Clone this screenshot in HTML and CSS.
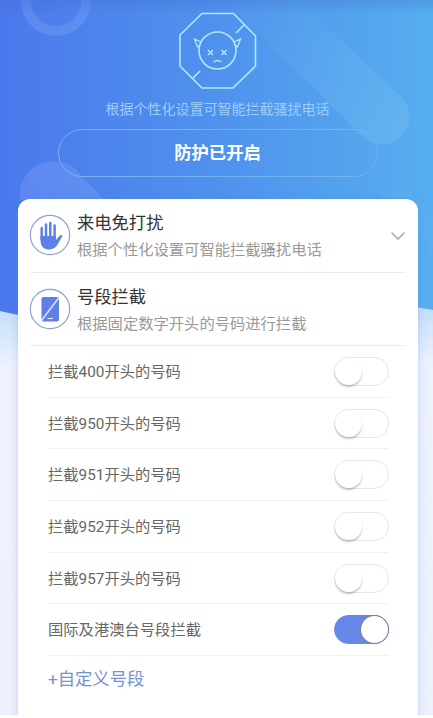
FILE: index.html
```html
<!DOCTYPE html>
<html lang="zh-CN">
<head>
<meta charset="utf-8">
<title>骚扰拦截</title>
<link rel="stylesheet" href="styles.css">
</head>
<body>
<main class="screen">
  <svg class="backdrop" width="433" height="360" viewBox="0 0 433 360" aria-hidden="true">
    <defs>
      <linearGradient id="sky" x1="0" y1="0" x2="1" y2="0">
        <stop offset="0" stop-color="#4b78ec"/>
        <stop offset=".5" stop-color="#4f92ed"/>
        <stop offset="1" stop-color="#56aeee"/>
      </linearGradient>
      <linearGradient id="shade" x1="0" y1="0" x2="0" y2="1">
        <stop offset="0" stop-color="#3f6cc8" stop-opacity=".3"/>
        <stop offset="1" stop-color="#3f6cc8" stop-opacity="0"/>
      </linearGradient>
      <linearGradient id="beam" gradientUnits="userSpaceOnUse" x1="270" y1="10" x2="390" y2="130">
        <stop offset="0" stop-color="#8fd0f5" stop-opacity=".03"/>
        <stop offset="1" stop-color="#8fd0f5" stop-opacity=".22"/>
      </linearGradient>
    </defs>
    <path d="M0 0H433V310L415 307L216 340L18 315L0 311Z" fill="url(#sky)"/>
    <circle cx="56" cy="1" r="30" fill="none" stroke="#8fb2f8" stroke-opacity=".26" stroke-width="10"/>
    <path d="M225 0H298L400 96A27 27 0 0 1 364 138Z" fill="url(#beam)"/>
    <path d="M20 200A34 34 0 0 1 83 178L105 200Z" fill="#9ab4ff" fill-opacity=".24"/>
    <path d="M375 190L433 248V215L408 190Z" fill="#8fd0f5" fill-opacity=".08"/>
    <rect width="433" height="14" fill="url(#shade)"/>
  </svg>
  <header class="hero">
    <svg class="emblem" width="80" height="80" viewBox="0 0 80 80" fill="none" stroke="#b0e8ff" stroke-width="1.600">
      <path d="M24 2.500H55.500L77.500 25V55L55 77H24L2 55V24Z"/>
      <path d="M66 14L58 22M15 67L22 60"/>
      <circle cx="39.500" cy="39.500" r="18.500"/>
      <path d="M23 31L16.500 28L19.500 36L22 34M56 31L62.500 28L59.500 36L57 34" stroke-width="1.300"/>
      <path d="M30 39l5 5m0-5l-5 5M43.500 39l5 5m0-5l-5 5M35.500 51q4-2.800 8 0" stroke-width="1.500"/>
    </svg>
    <p class="hero-text">根据个性化设置可智能拦截骚扰电话</p>
    <button class="status">防护已开启</button>
  </header>
  <section class="card">
    <div class="feature">
      <svg class="feature-icon" width="42" height="42" viewBox="0 0 42 42">
        <circle cx="21" cy="21" r="19.700" fill="none" stroke="#8d9fd8" stroke-width="1.200"/>
        <g fill="none" stroke="#5f7fe8" stroke-linecap="round" stroke-width="2.500">
          <path d="M12.700 14V25M17 10.500V24M21.300 9V24M25.600 11.500V25"/>
        </g>
        <path d="M11.450 22H26.850V26L31 21.500Q33 20.500 33.500 22L28.500 30.500Q25.500 35.500 19.500 35.500Q11.450 35 11.450 26Z" fill="#5f7fe8"/>
      </svg>
      <div class="feature-copy"><h2>来电免打扰</h2><p>根据个性化设置可智能拦截骚扰电话</p></div>
      <svg class="chevron" width="16" height="10" viewBox="0 0 16 10" fill="none" stroke="#adadad" stroke-width="1.600"><path d="M1.500 1.500L8 8L14.500 1.500"/></svg>
    </div>
    <div class="feature">
      <svg class="feature-icon" width="42" height="42" viewBox="0 0 42 42">
        <circle cx="21" cy="21" r="19.700" fill="none" stroke="#8d9fd8" stroke-width="1.200"/>
        <rect x="12.500" y="9" width="17.500" height="24.500" rx="2" fill="#5f7fe8"/>
        <path d="M12.500 32.500L30 9.500" stroke="#dfe6ff" stroke-width="1.500"/>
        <path d="M18.500 30.500H24" stroke="#dfe6ff" stroke-width="1.200"/>
      </svg>
      <div class="feature-copy"><h2>号段拦截</h2><p>根据固定数字开头的号码进行拦截</p></div>
    </div>
    <ul class="rules">
      <li><span>拦截400开头的号码</span><i class="switch"></i></li>
      <li><span>拦截950开头的号码</span><i class="switch"></i></li>
      <li><span>拦截951开头的号码</span><i class="switch"></i></li>
      <li><span>拦截952开头的号码</span><i class="switch"></i></li>
      <li><span>拦截957开头的号码</span><i class="switch"></i></li>
      <li><span>国际及港澳台号段拦截</span><i class="switch on"></i></li>
    </ul>
    <a class="add">+自定义号段</a>
  </section>
</main>
</body>
</html>
```
FILE: styles.css
```css
* { box-sizing: border-box; margin: 0; padding: 0; }
body {
  width: 433px;
  height: 718px;
  overflow: hidden;
  background: #fff;
  font-family: Roboto, "Noto Sans CJK SC", sans-serif;
}
.screen {
  position: relative;
  height: 715px;
  overflow: hidden;
  background: linear-gradient(#c5dffa 310px, #edf2fe 365px, #edf1fd);
}
.backdrop { position: absolute; top: 0; left: 0; }
.hero {
  position: relative;
  height: 199px;
  padding-top: 11px;
  display: flex;
  flex-direction: column;
  align-items: center;
}
.emblem { display: block; margin-right: -3px; }
.hero-text {
  margin-top: 8px;
  line-height: 20px;
  font-size: 14px;
  color: #9fccf8;
  margin-right: -2px;
}
.status {
  width: 320px;
  height: 48px;
  margin: 10px -2px 0 0;
  border: 1px solid #74b1f2;
  border-radius: 24px;
  background: transparent;
  color: #fff;
  font: bold 17.3px/44px "Noto Sans CJK SC", sans-serif;
  padding-bottom: 2px;
}
.card {
  position: relative;
  width: 400px;
  height: 530px;
  margin-left: 18px;
  padding: 0 12px;
  border-radius: 12px 12px 0 0;
  background: #fff;
  box-shadow: 0 0 9px rgba(85, 130, 235, .3);
}
.feature {
  height: 73.5px;
  display: flex;
  align-items: center;
  border-bottom: 1px solid #ececec;
}
.feature-icon { flex: none; margin-left: -1px; }
.feature-copy { margin-left: 6px; padding-top: 4px; flex: 1; white-space: nowrap; }
h2 { font-size: 17.3px; line-height: 26px; font-weight: 400; color: #333; }
.feature-copy p { font-size: 15.3px; line-height: 28px; color: #999; }
.chevron { flex: none; margin-top: 2px; }
.rules { list-style: none; padding: 0 17px 0 18px; }
.rules li {
  height: 51.7px;
  display: flex;
  justify-content: space-between;
  align-items: center;
  border-bottom: 1px solid #f0f0f0;
  font-size: 15.3px;
  color: #666;
}
.rules span { padding-bottom: 3px; }
.switch {
  width: 55px;
  height: 29px;
  border: 1px solid #e6e6e6;
  border-radius: 15px;
}
.switch::before {
  content: "";
  display: block;
  width: 27px;
  height: 27px;
  border-radius: 50%;
  background: #fff;
  box-shadow: 0 2px 2px rgba(0, 0, 0, .22);
}
.switch.on { background: #6888e8; border-color: #6888e8; }
.switch.on::before { margin-left: 26px; box-shadow: 0 0 0 1px #777f99; }
.add { display: block; margin: 10px 0 0 18px; font-size: 17.3px; line-height: 26px; color: #7890ce; }
```
